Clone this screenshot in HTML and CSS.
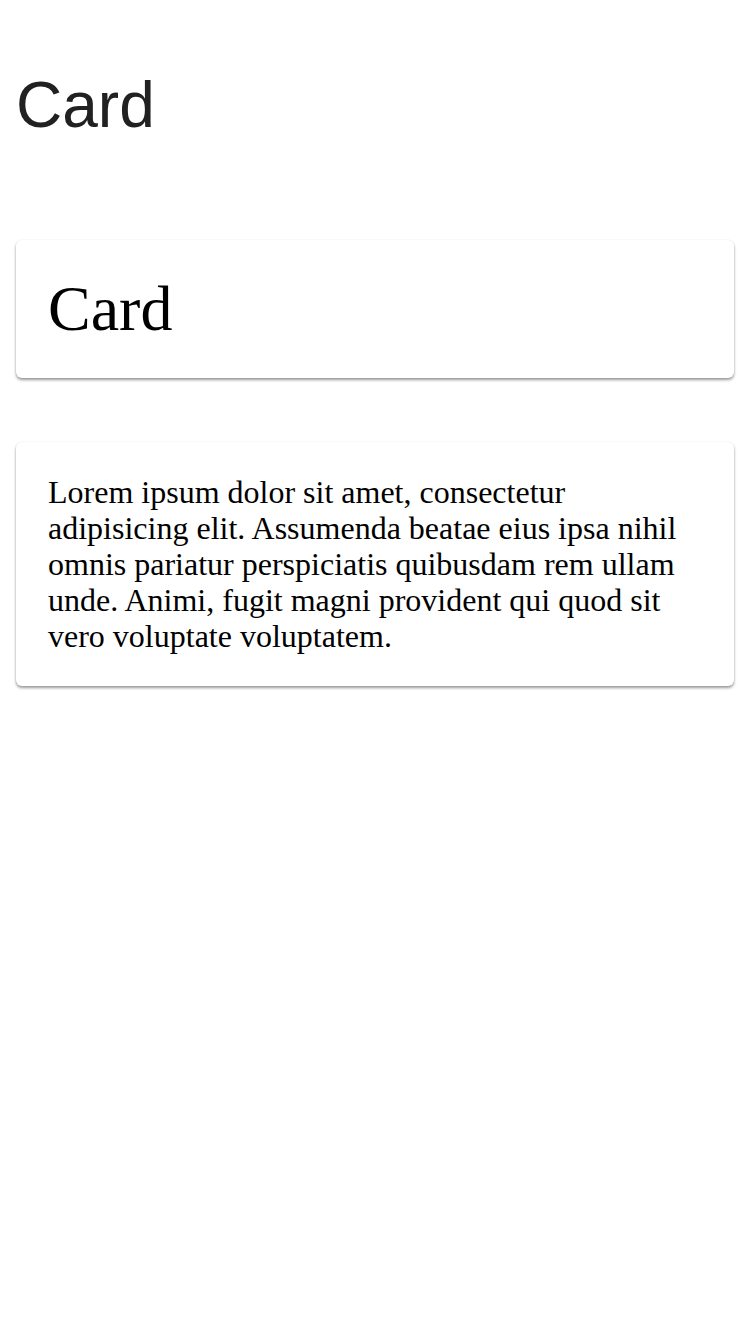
FILE: index.html
```html
<!DOCTYPE html>
<html>
<head>
<meta charset="utf-8">
<link rel="stylesheet" href="styles.css">
</head>
<body>
<main class="page">
  <h1 class="page-title">Card</h1>
  <div class="cards">
    <section class="card">
      <h2 class="card-title">Card</h2>
    </section>
    <section class="card">
      <p class="card-text">Lorem ipsum dolor sit amet, consectetur adipisicing elit. Assumenda beatae eius ipsa nihil omnis pariatur perspiciatis quibusdam rem ullam unde. Animi, fugit magni provident qui quod sit vero voluptate voluptatem.</p>
    </section>
  </div>
</main>
</body>
</html>
```
FILE: styles.css
```css
html, body {
  margin: 0;
  padding: 0;
  background: #ffffff;
}
.page {
  padding: 68px 16px 40px;
}
.page-title {
  margin: 0;
  font-family: "Liberation Sans", Arial, sans-serif;
  font-weight: 400;
  font-size: 64px;
  line-height: 74px;
  color: #212121;
}
.cards {
  display: flex;
  flex-direction: column;
  gap: 64px;
  margin-top: 98px;
}
.card {
  background: #ffffff;
  border-radius: 6px;
  padding: 32px;
  box-shadow: 0 2px 3px rgba(0, 0, 0, 0.4), 0 0 2px rgba(0, 0, 0, 0.06);
}
.card-title {
  margin: 0;
  font-family: "Liberation Serif", "Times New Roman", serif;
  font-weight: 400;
  font-size: 64px;
  line-height: 74px;
  color: #000000;
}
.card-text {
  margin: 0;
  font-family: "Liberation Serif", "Times New Roman", serif;
  font-size: 32px;
  line-height: 36px;
  color: #000000;
}
```
